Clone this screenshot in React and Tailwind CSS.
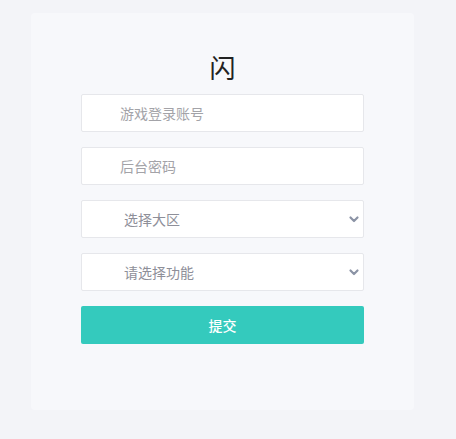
const fieldBase =
  'w-full h-[38px] bg-white border border-[#e6e7eb] rounded-[2px] text-[14px] outline-none';

function Chevron() {
  return (
    <svg
      className="absolute right-[4px] top-1/2 -translate-y-1/2 w-[12px] h-[12px] pointer-events-none"
      viewBox="0 0 12 12"
      fill="none"
    >
      <path d="M2.5 4.5 6 8l3.5-3.5" stroke="#8b93a5" strokeWidth="2.2" strokeLinecap="round" strokeLinejoin="round" />
    </svg>
  );
}

function SelectBox({ label }) {
  return (
    <div className="relative">
      <select className={`${fieldBase} appearance-none pl-[42px] text-[#8e8f99]`} defaultValue="">
        <option value="">{label}</option>
      </select>
      <Chevron />
    </div>
  );
}

export default function App() {
  return (
    <div
      className="w-[456px] h-[439px] bg-[#f3f4f8] pt-[13px] pl-[31px]"
      style={{ fontFamily: '"Noto Sans CJK SC", "Liberation Sans", sans-serif' }}
    >
      <div className="w-[383px] h-[397px] bg-[#f7f8fb] rounded-[4px] pt-[37px] px-[50px]">
        <h1 className="text-center text-[26px] leading-[34px] text-[#222] font-normal">闪</h1>

        <div className="mt-[10px] flex flex-col gap-[15px]">
          <input className={`${fieldBase} pl-[38px] placeholder:text-[#a3a3a8]`} placeholder="游戏登录账号" />
          <input className={`${fieldBase} pl-[38px] placeholder:text-[#a3a3a8]`} placeholder="后台密码" />
          <SelectBox label="选择大区" />
          <SelectBox label="请选择功能" />
          <button className="w-full h-[38px] bg-[#34cabd] rounded-[2px] text-white text-[14px] font-medium">提交</button>
        </div>
      </div>
    </div>
  );
}
